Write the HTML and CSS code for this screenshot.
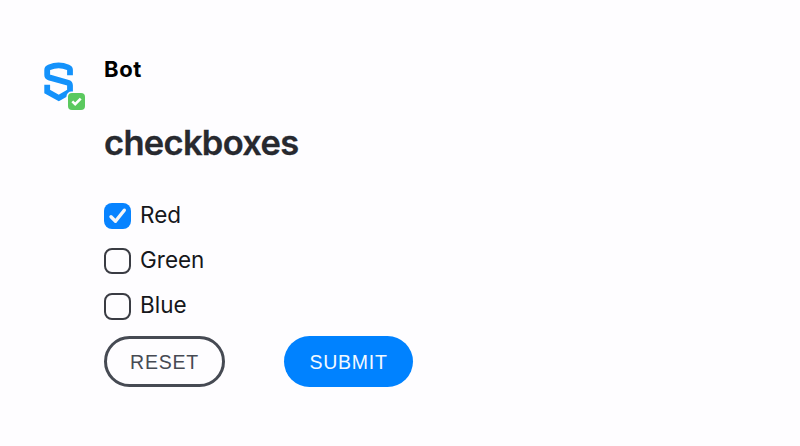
FILE: index.html
```html
<!DOCTYPE html>
<html lang="en">
<head>
<meta charset="utf-8">
<title>Checkboxes</title>
<link rel="stylesheet" href="styles.css">
</head>
<body>
<article class="message">
  <div class="avatar">
    <svg class="logo" viewBox="0 0 30 40" aria-hidden="true"><path d="M26 13.2V7.8Q26 6.2 24 5.4Q14.6 1.4 5.2 5.4Q3.2 6.2 3.2 8V13Q3.2 14.8 5 15.4L24 20.8Q26 21.5 26 23.6V29.5L14.8 36L3.2 29.6V22.8" fill="none" stroke="#1492fb" stroke-width="5.8"/></svg>
    <svg class="badge" viewBox="0 0 17 17" aria-hidden="true"><rect x="-1.5" y="-1.5" width="20" height="20" rx="5" fill="#fefdff"/><rect width="17" height="17" rx="4" fill="#5bc95f"/><path d="M4.3 8.4L7.2 11.2L12.7 5.6" fill="none" stroke="#fff" stroke-width="2.6"/></svg>
  </div>
  <div class="content">
    <div class="sender">Bot</div>
    <h1 class="title">checkboxes</h1>
    <form class="form">
      <label class="option"><span class="box checked"><svg viewBox="0 0 27 26"><path d="M7 13.7L11.5 18.2L20.3 7.2" fill="none" stroke="#f4f5f7" stroke-width="3.4" stroke-linecap="round" stroke-linejoin="round"/></svg></span><span class="label">Red</span></label>
      <label class="option"><span class="box"></span><span class="label">Green</span></label>
      <label class="option"><span class="box tall"></span><span class="label">Blue</span></label>
      <div class="actions">
        <button type="button" class="button reset">RESET</button>
        <button type="button" class="button submit">SUBMIT</button>
      </div>
    </form>
  </div>
</article>
</body>
</html>
```
FILE: styles.css
```css
* { box-sizing: border-box; }
body { margin: 0; height: 446px; background: #fefdff; font-family: Inter, sans-serif; color: #15171b; overflow: hidden; }
.message { display: flex; padding: 53px 0 0 44px; }
.avatar { position: relative; width: 60px; padding-top: 9px; }
.logo { display: block; width: 30px; height: 40px; }
.badge { position: absolute; left: 24px; top: 40px; width: 17px; height: 17px; overflow: visible; }
.sender { height: 32px; line-height: 32px; font-size: 22px; font-weight: 700; letter-spacing: 0.6px; color: #000; }
.title { margin: 35px 0 0; height: 46px; line-height: 46px; font-size: 34.5px; font-weight: 600; letter-spacing: -0.7px; color: #27292f; -webkit-text-stroke: 0.3px #27292f; }
.form { margin: 27px 0 0; }
.option { display: flex; align-items: center; gap: 9px; height: 45px; font-size: 22.5px; line-height: 30px; }
.label { padding-bottom: 2px; }
.box { width: 27px; height: 26px; border: 2px solid #3a3c43; border-radius: 8px; }
.box.tall { height: 27px; margin-top: 2px; }
.box.checked { border: 0; background: #0783ff; }
.box svg { display: block; width: 27px; height: 26px; }
.actions { display: flex; gap: 59px; margin-top: 8px; }
.button { height: 51px; padding: 1px 0 0; border: 0; border-radius: 26px; font: 19.5px "Liberation Sans", sans-serif; letter-spacing: 0.75px; }
.reset { width: 121px; border: 3px solid #464a53; background: #fefdff; color: #464a53; }
.submit { width: 129px; background: #0082ff; color: #f2f9ff; }
```
